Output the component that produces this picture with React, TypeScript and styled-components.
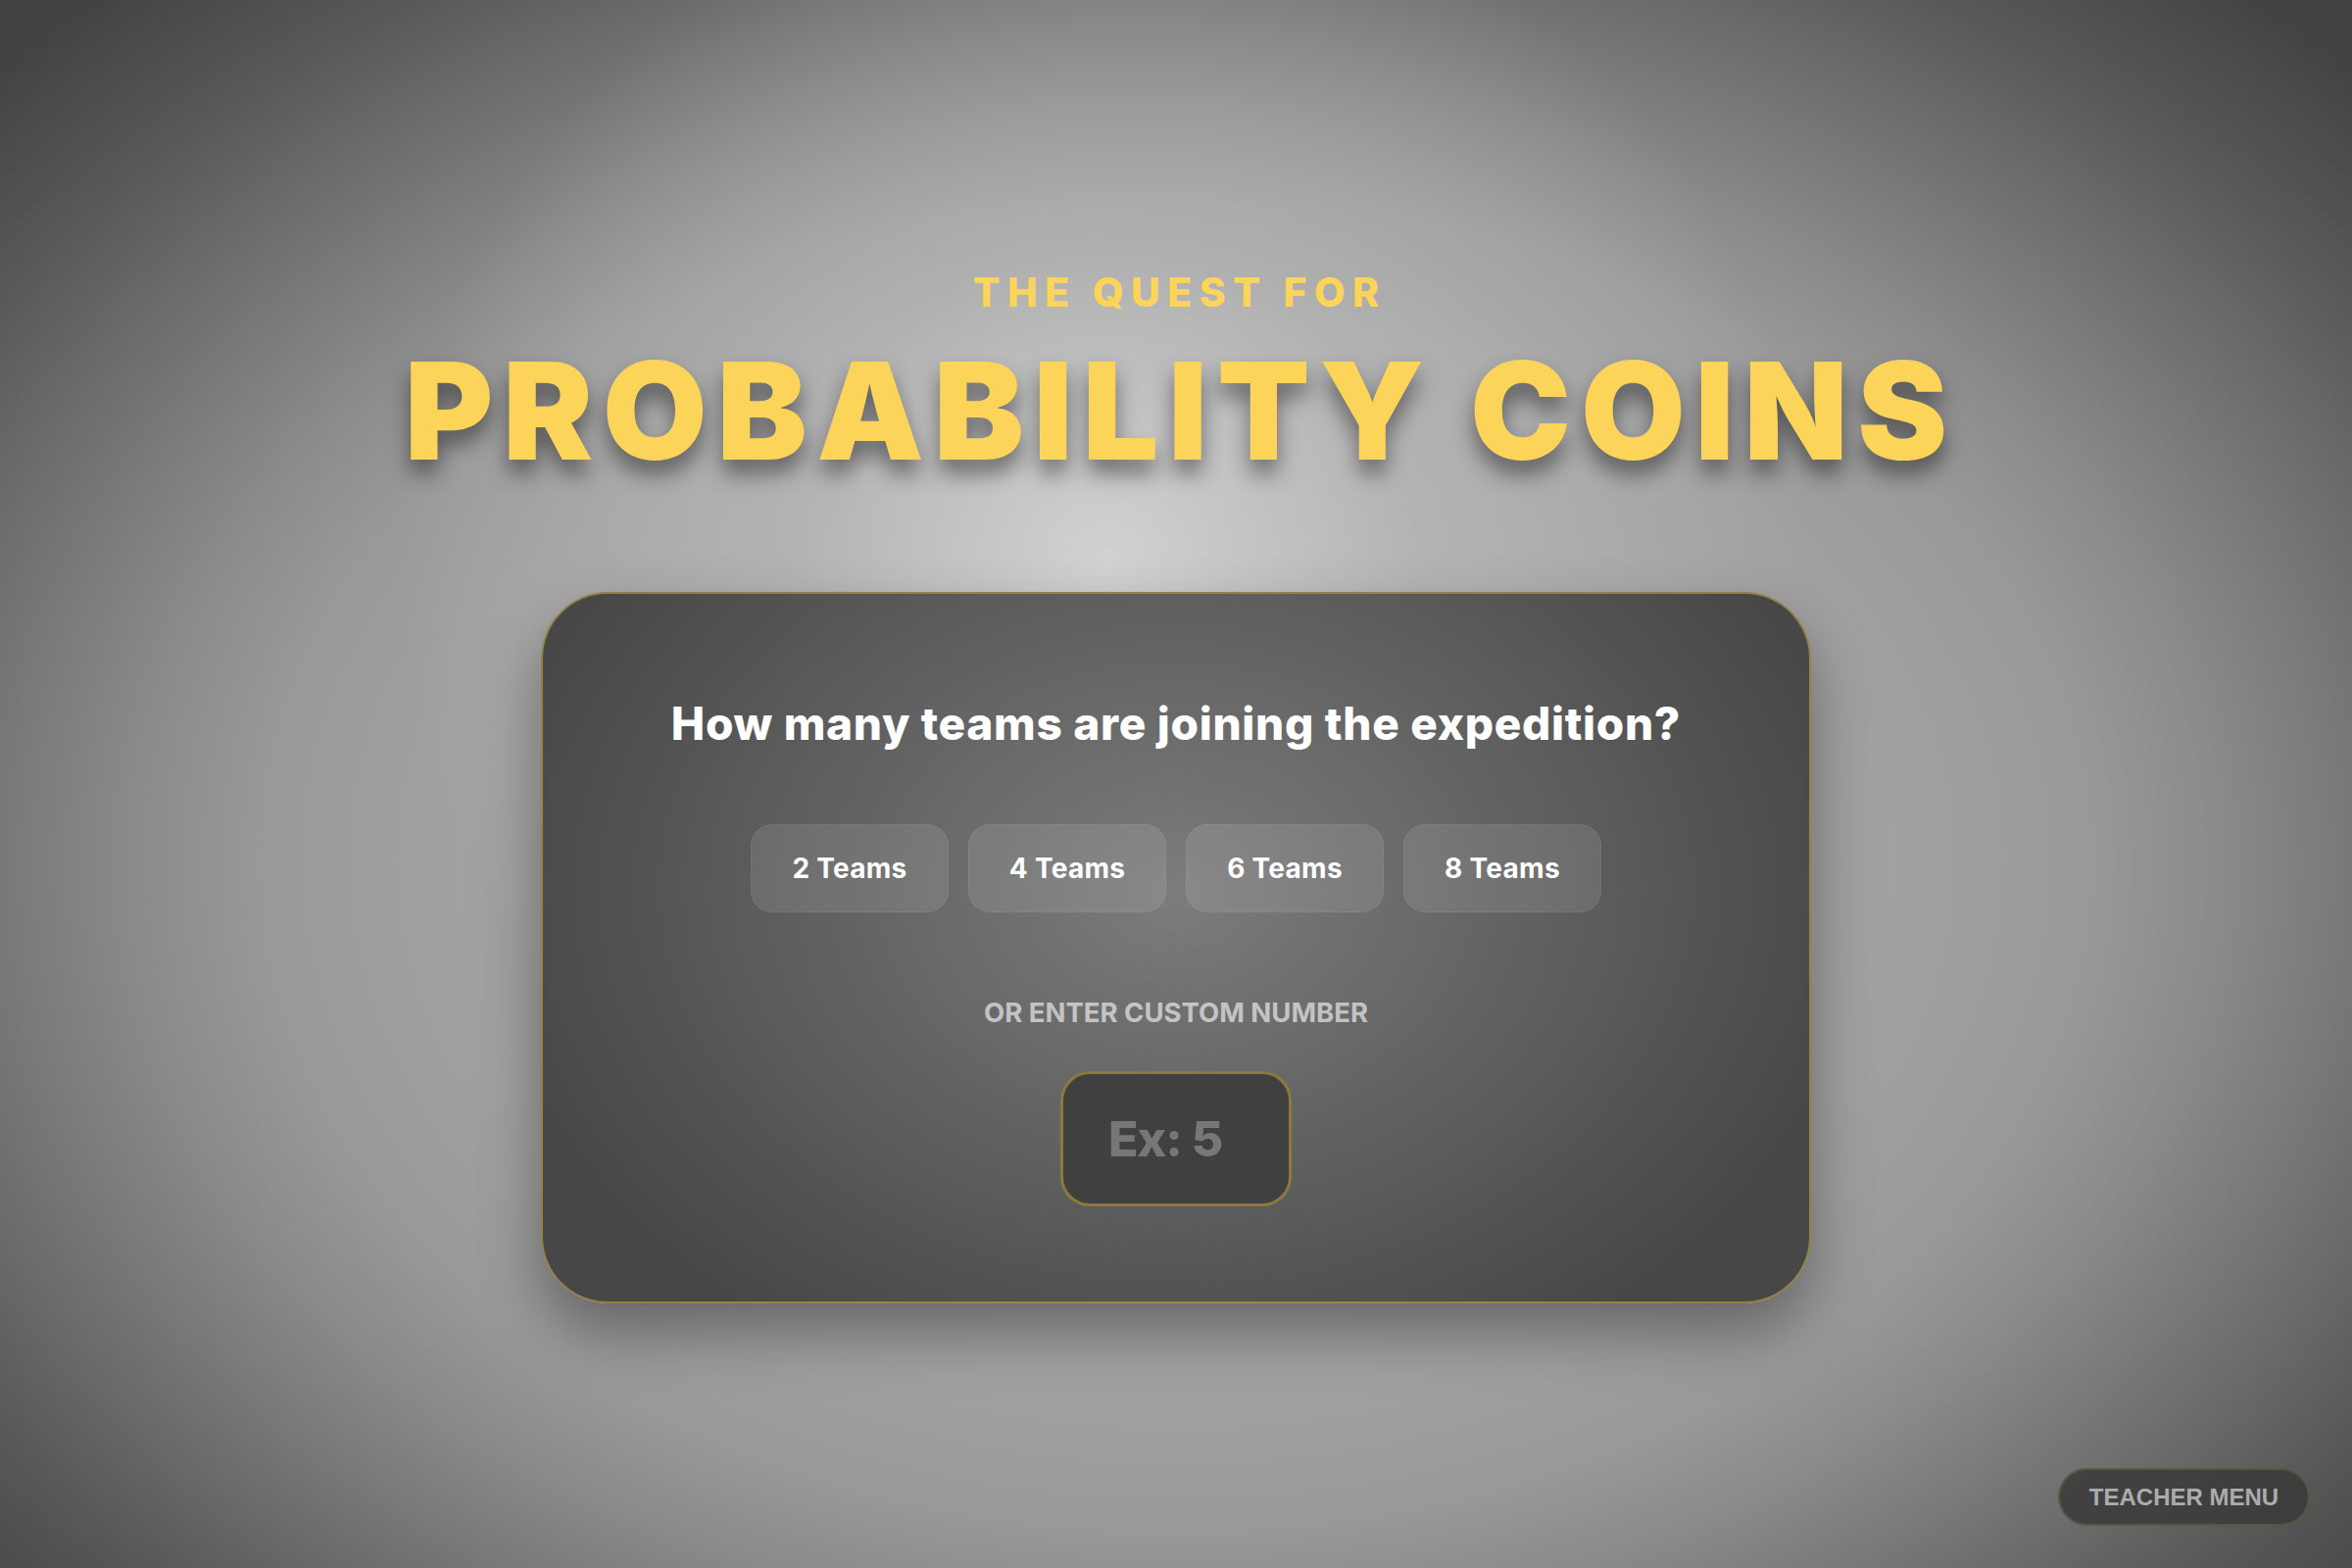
import React, { useState } from 'react';
import styled, { createGlobalStyle } from 'styled-components';

const GlobalStyle = createGlobalStyle`
  html, body {
    margin: 0;
    padding: 0;
    height: 100%;
  }
  body {
    font-family: Inter, "Noto Sans", sans-serif;
    background: #454545;
  }
`;

const TEAM_OPTIONS = [2, 4, 6, 8];

const App = () => {
  const [teams, setTeams] = useState<number | null>(null);
  const [custom, setCustom] = useState('');

  return (
    <>
      <GlobalStyle />
      <Page>
        <Header>
          <Kicker>The Quest For</Kicker>
          <Title>Probability Coins</Title>
        </Header>

        <Card>
          <Question>How many teams are joining the expedition?</Question>
          <Options>
            {TEAM_OPTIONS.map((n) => (
              <TeamButton key={n} $active={teams === n} onClick={() => setTeams(n)}>
                {n} Teams
              </TeamButton>
            ))}
          </Options>
          <CustomLabel>Or enter custom number</CustomLabel>
          <CustomInput
            type="number"
            placeholder="Ex: 5"
            value={custom}
            onChange={(e) => setCustom(e.target.value)}
          />
        </Card>

        <TeacherMenu>Teacher Menu</TeacherMenu>
      </Page>
    </>
  );
};

export default App;

const Page = styled.div`
  position: relative;
  width: 100%;
  height: 1600px;
  box-sizing: border-box;
  padding-top: 8px;
  display: flex;
  flex-direction: column;
  align-items: center;
  justify-content: center;
  overflow: hidden;
  /* spotlight behind the title, over a wide vignette */
  background:
    radial-gradient(
      circle 720px at 47% 36%,
      rgba(225, 225, 225, 0.75) 0%,
      rgba(210, 210, 210, 0.35) 45%,
      rgba(200, 200, 200, 0) 100%
    ),
    radial-gradient(
      ellipse 57% 62.5% at 50% 55%,
      #a8a8a8 0%,
      #a0a0a0 55%,
      #999999 68%,
      #8a8a8a 78%,
      #747474 90%,
      #585858 105%,
      #424242 120%
    );
`;

const Header = styled.div`
  display: flex;
  flex-direction: column;
  align-items: center;
  margin-bottom: 116px;
`;

const Kicker = styled.div`
  font-size: 41px;
  font-weight: 800;
  letter-spacing: 0.18em;
  margin-right: -0.18em;
  text-transform: uppercase;
  color: #fcd45a;
  line-height: 1;
  margin-bottom: 31px;
`;

const Title = styled.h1`
  margin: 0;
  font-size: 138px;
  font-weight: 900;
  line-height: 1;
  letter-spacing: 0.07em;
  margin-right: -0.07em;
  text-transform: uppercase;
  color: #fcd45a;
  text-shadow: 0 14px 22px rgba(0, 0, 0, 0.45);
`;

const Card = styled.div`
  width: 1296px;
  box-sizing: border-box;
  padding: 105px 80px 97px;
  display: flex;
  flex-direction: column;
  align-items: center;
  border: 2px solid rgba(170, 148, 70, 0.75);
  border-radius: 68px;
  background: radial-gradient(
    ellipse 55% 75% at 50% 42%,
    #7c7c7c 0%,
    #676767 40%,
    #545454 75%,
    #474747 100%
  );
  box-shadow: 0 30px 60px rgba(0, 0, 0, 0.35);
`;

const Question = styled.h2`
  margin: 0;
  font-size: 46px;
  font-weight: 800;
  line-height: 1.2;
  letter-spacing: 0.015em;
  color: #ffffff;
`;

const Options = styled.div`
  display: flex;
  gap: 20px;
  margin-top: 74px;
`;

const TeamButton = styled.button<{ $active: boolean }>`
  width: 202px;
  height: 90px;
  border-radius: 22px;
  border: 1px solid rgba(255, 255, 255, 0.06);
  background: ${(p) => (p.$active ? 'rgba(252, 212, 90, 0.3)' : 'rgba(255, 255, 255, 0.1)')};
  color: #ffffff;
  font-family: Inter, "Noto Sans", sans-serif;
  font-size: 28px;
  font-weight: 700;
  letter-spacing: 0.01em;
  cursor: pointer;
`;

const CustomLabel = styled.div`
  margin-top: 86px;
  font-size: 27.5px;
  font-weight: 700;
  line-height: 1.2;
  text-transform: uppercase;
  color: rgba(255, 255, 255, 0.6);
`;

const CustomInput = styled.input`
  margin-top: 43px;
  width: 236px;
  height: 138px;
  box-sizing: border-box;
  padding: 0 40px 0 46px;
  border-radius: 30px;
  border: 3px solid rgba(160, 135, 60, 0.8);
  background: #404040;
  color: #ffffff;
  font-family: Inter, "Noto Sans", sans-serif;
  font-size: 50px;
  font-weight: 800;
  letter-spacing: -0.02em;
  outline: none;
  -moz-appearance: textfield;

  &::placeholder {
    color: #777777;
  }
  &::-webkit-outer-spin-button,
  &::-webkit-inner-spin-button {
    -webkit-appearance: none;
    margin: 0;
  }
`;

const TeacherMenu = styled.button`
  position: absolute;
  right: 43px;
  bottom: 43px;
  width: 257px;
  height: 59px;
  border-radius: 30px;
  border: 2px solid rgba(150, 130, 70, 0.35);
  background: rgba(58, 58, 58, 0.85);
  color: #acacac;
  font-family: "Liberation Sans", Arial, sans-serif;
  font-size: 24px;
  font-weight: 700;
  text-transform: uppercase;
  cursor: pointer;
`;
